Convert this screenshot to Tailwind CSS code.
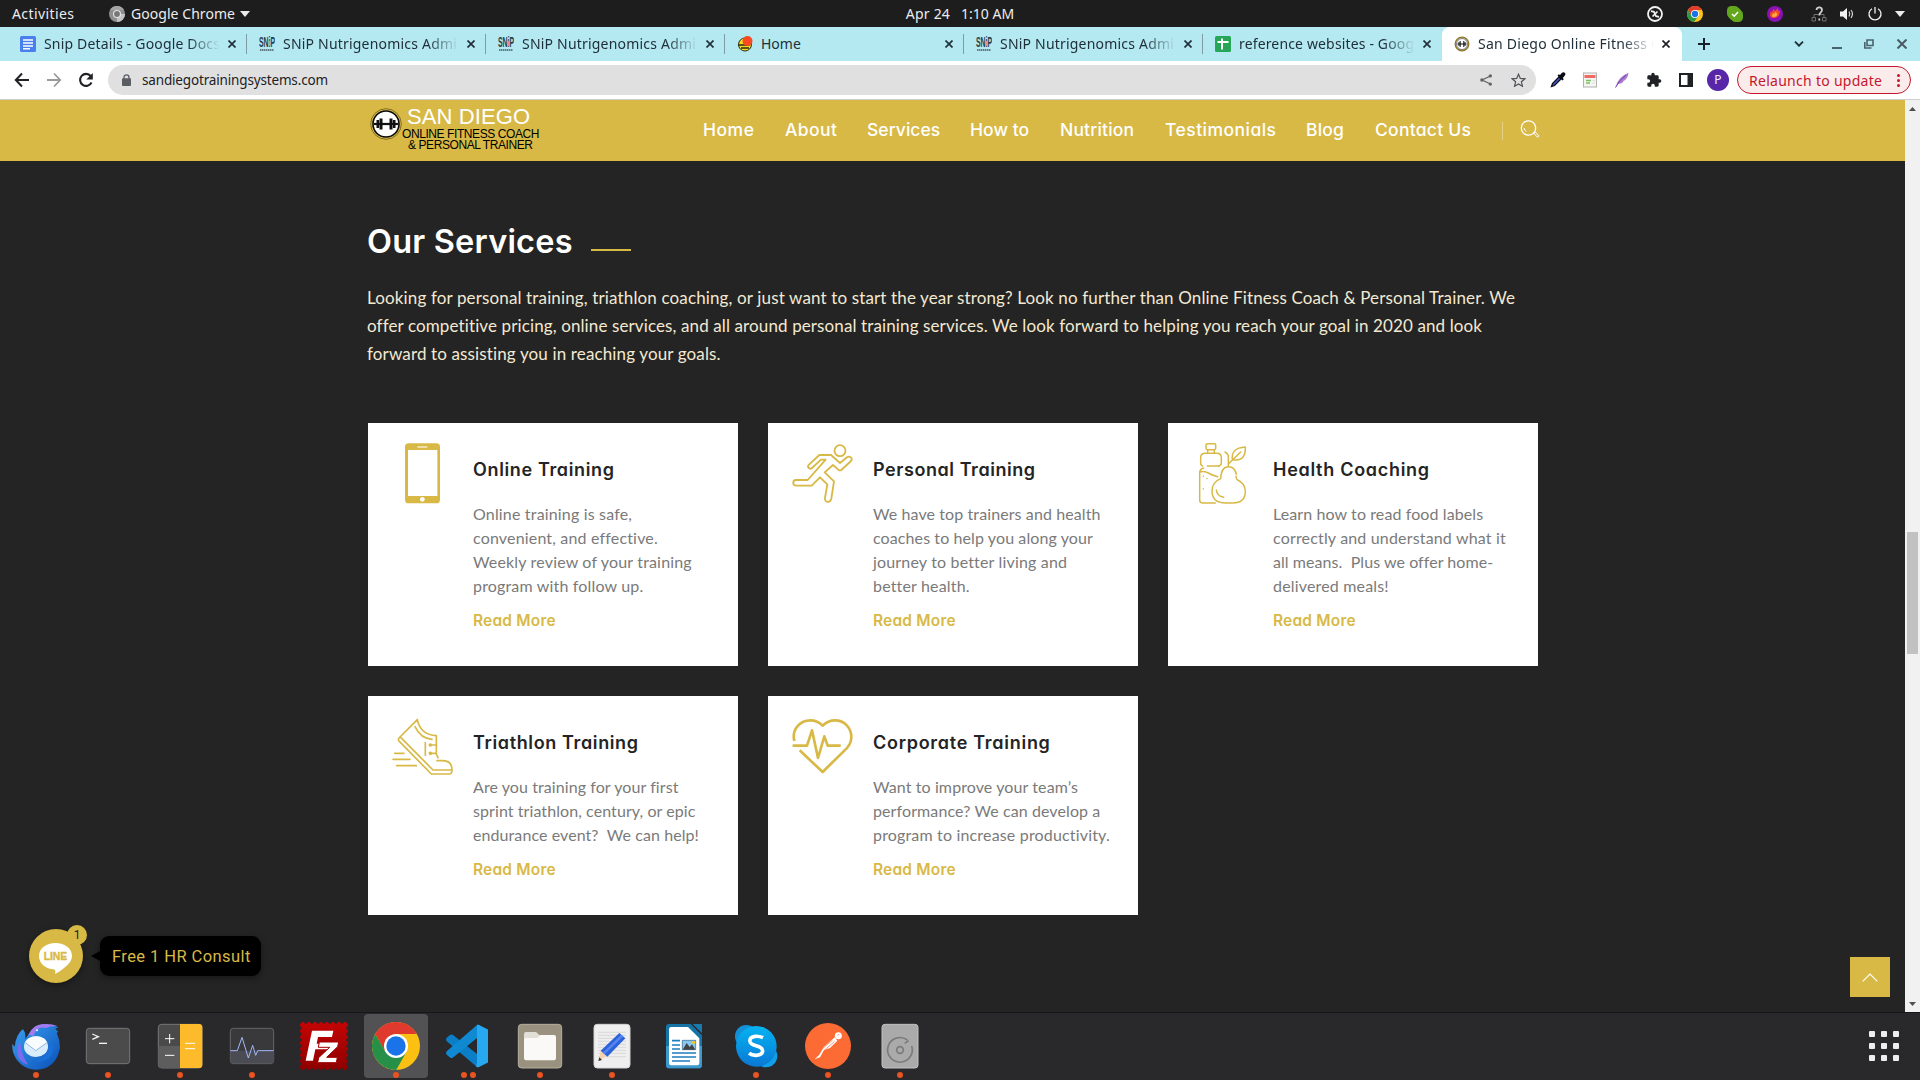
<!DOCTYPE html>
<html lang="en">
<head>
<meta charset="utf-8">
<title>San Diego Online Fitness Coach</title>
<script src="https://cdn.jsdelivr.net/npm/@tailwindcss/browser@4"></script>
</head>
<body class="w-[1920px] h-[1080px] overflow-hidden flex flex-col bg-[#242424] font-['Noto_Sans',sans-serif]">

<!-- system top bar -->
<header class="relative h-[27px] shrink-0 bg-[#1d1d1d] text-[#ececec] text-[14px] leading-[26px] flex items-center justify-between pl-3 pr-[15px]">
  <div class="flex items-center">
    <span class="w-[97px] tracking-[0.41px]">Activities</span>
    <svg class="w-4 h-4" viewBox="0 0 16 16"><circle cx="8" cy="8" r="8" fill="#8f8f8f"/><path d="M8 8h8a8 8 0 0 1-8 8z" fill="#c4c4c4"/><path d="M1 4a8 8 0 0 1 14 0H8z" fill="#a5a5a5"/><circle cx="8" cy="8" r="4" fill="#e6e6e6"/><circle cx="8" cy="8" r="2.9" fill="#777"/></svg>
    <span class="ml-[6px] tracking-[0.05px]">Google Chrome</span>
    <svg class="ml-[5px] w-[10px] h-[6px]" viewBox="0 0 10 6"><path d="M0 0h10L5 6z" fill="#ececec"/></svg>
  </div>
  <div class="absolute left-1/2 -translate-x-1/2 flex gap-[11px] whitespace-nowrap"><span class="tracking-[0.2px]">Apr 24</span><span>1:10 AM</span></div>
  <div class="flex items-center">
    <svg class="w-4 h-4 mr-6" viewBox="0 0 16 16" fill="none" stroke="#f2f2f2"><circle cx="8" cy="8" r="7" stroke-width="1.8"/><path d="M4 5.200 7 5.800 8 8 9 10.200 12 10.800M7.500 8.500 5.500 10.500M8.500 7.500l2-2" stroke-width="1.700"/></svg>
    <svg class="w-4 h-4 mr-6" viewBox="0 0 48 48"><circle cx="24" cy="24" r="24" fill="#fcc31c"/><path d="M3.200 12A24 24 0 0 1 44.800 12H24L13.600 30z" fill="#e33b2e"/><path d="M3.200 12a24 24 0 0 0 17.700 35.800L34.400 30H13.600z" fill="#2d9a48"/><circle cx="24" cy="24" r="12" fill="#fff"/><circle cx="24" cy="24" r="9.500" fill="#1a73e8"/></svg>
    <svg class="w-4 h-4 mr-6" viewBox="0 0 16 16"><rect width="12" height="12" rx="4.500" fill="#62a71c"/><rect x="4" y="4" width="12" height="12" rx="4.500" fill="#62a71c"/><circle cx="8" cy="8" r="7" fill="#62a71c"/><path d="m5 8 2.200 2.200L11 6" stroke="#fff" stroke-width="1.600" fill="none"/></svg>
    <svg class="w-4 h-4 mr-7" viewBox="0 0 16 16"><circle cx="8" cy="8" r="8" fill="#8a12b4"/><path d="M3 9.500 3.500 5l1.300 1.500L6.500 3l1.500 2 3-3v3l2-.5c0 3-1 7-5.500 7.500C5 12.300 3.500 11.500 3 9.500z" fill="#f5482c"/><path d="M5 9.500 6 7l1 1 2-2.500.5 2 1-.5c0 2.500-1.500 4-3.500 4-1 0-2-.5-2-1.500z" fill="#fcae3a"/></svg>
    <svg class="w-4 h-4 mr-3" viewBox="0 0 16 16" fill="none" stroke="#6f6f6f"><path d="M1 11.500h3.500v3.500H1zM11.500 11.500H15v3.500h-3.500zM3 11V8.500h10V11"/><path d="M5.500 4c0-3.500 5.500-3.500 5.500 0 0 2.500-2.700 2.500-2.700 5.500M8.300 12.500v2" stroke="#cfcfcf" stroke-width="1.800"/></svg>
    <svg class="w-4 h-4 mr-3" viewBox="0 0 16 16"><path d="M1 5.500h3L8 2v12L4 10.500H1z" fill="#f2f2f2"/><path d="M10 5.500q1.500 2.500 0 5M12 4q3 4 0 8" fill="none" stroke="#d5d5d5" stroke-width="1.200"/></svg>
    <svg class="w-4 h-4 mr-3" viewBox="0 0 16 16" fill="none" stroke="#f2f2f2" stroke-width="1.300"><path d="M5 2.700a6 6 0 1 0 6 0M8 1v6.500"/></svg>
    <svg class="w-[10px] h-[6px]" viewBox="0 0 10 6"><path d="M0 0h10L5 6z" fill="#ececec"/></svg>
  </div>
</header>

<!-- browser tabs -->
<nav class="h-[34px] shrink-0 bg-[#b5e9f2] flex items-stretch pl-2 text-[14px] leading-[34px] text-[#20303a]">
  <div class="w-[239px] flex items-center pl-3">
    <svg class="w-4 h-4 shrink-0" viewBox="0 0 16 16"><rect width="16" height="16" rx="1.500" fill="#4a80ee"/><path d="M3 4h10M3 7h10M3 10h10M3 12.800h7" stroke="#fff" stroke-width="1.500"/></svg>
    <span class="ml-2 w-[176px] overflow-hidden whitespace-nowrap tracking-[0.16px] [mask-image:linear-gradient(to_right,black_82%,transparent)]">Snip Details - Google Docs</span>
    <svg class="ml-2 w-2 h-2" viewBox="0 0 8 8"><path d="m.5.500 7 7M7.500.500l-7 7" stroke="#20303a" stroke-width="1.700"/></svg>
    <i class="ml-auto w-px h-5 bg-[#7f9ca4]"></i>
  </div>
  <div class="w-[239px] flex items-center pl-3">
    <svg class="w-4 h-4 shrink-0" viewBox="0 0 16 16"><text transform="scale(.46 1)" x="0" y="11" font-family="Liberation Sans" font-weight="bold" font-size="15" fill="#26404a">SNiP</text><rect x="10" y="5" width="1.500" height="5" fill="#e58a8a"/><path d="M1 14h14" stroke="#5f7c84" stroke-width="2" stroke-dasharray="1.500 .5"/></svg>
    <span class="ml-2 w-[176px] overflow-hidden whitespace-nowrap tracking-[0.2px] [mask-image:linear-gradient(to_right,black_82%,transparent)]">SNiP Nutrigenomics Admi</span>
    <svg class="ml-2 w-2 h-2" viewBox="0 0 8 8"><path d="m.5.500 7 7M7.500.500l-7 7" stroke="#20303a" stroke-width="1.700"/></svg>
    <i class="ml-auto w-px h-5 bg-[#7f9ca4]"></i>
  </div>
  <div class="w-[239px] flex items-center pl-3">
    <svg class="w-4 h-4 shrink-0" viewBox="0 0 16 16"><text transform="scale(.46 1)" x="0" y="11" font-family="Liberation Sans" font-weight="bold" font-size="15" fill="#26404a">SNiP</text><rect x="10" y="5" width="1.500" height="5" fill="#e58a8a"/><path d="M1 14h14" stroke="#5f7c84" stroke-width="2" stroke-dasharray="1.500 .5"/></svg>
    <span class="ml-2 w-[176px] overflow-hidden whitespace-nowrap tracking-[0.2px] [mask-image:linear-gradient(to_right,black_82%,transparent)]">SNiP Nutrigenomics Admi</span>
    <svg class="ml-2 w-2 h-2" viewBox="0 0 8 8"><path d="m.5.500 7 7M7.500.500l-7 7" stroke="#20303a" stroke-width="1.700"/></svg>
    <i class="ml-auto w-px h-5 bg-[#7f9ca4]"></i>
  </div>
  <div class="w-[239px] flex items-center pl-3">
    <svg class="w-4 h-4 shrink-0" viewBox="0 0 16 16"><circle cx="8" cy="8.500" r="6.500" fill="#f2da25" stroke="#2a2a10"/><path d="M1 9h10q3 0 3-3M4 12h8" stroke="#2a2a10" stroke-width="1.400" fill="none"/><circle cx="10.500" cy="5" r="5" fill="#fb4a22"/></svg>
    <span class="ml-2 w-[176px] overflow-hidden whitespace-nowrap">Home</span>
    <svg class="ml-2 w-2 h-2" viewBox="0 0 8 8"><path d="m.5.500 7 7M7.500.500l-7 7" stroke="#20303a" stroke-width="1.700"/></svg>
    <i class="ml-auto w-px h-5 bg-[#7f9ca4]"></i>
  </div>
  <div class="w-[239px] flex items-center pl-3">
    <svg class="w-4 h-4 shrink-0" viewBox="0 0 16 16"><text transform="scale(.46 1)" x="0" y="11" font-family="Liberation Sans" font-weight="bold" font-size="15" fill="#26404a">SNiP</text><rect x="10" y="5" width="1.500" height="5" fill="#e58a8a"/><path d="M1 14h14" stroke="#5f7c84" stroke-width="2" stroke-dasharray="1.500 .5"/></svg>
    <span class="ml-2 w-[176px] overflow-hidden whitespace-nowrap tracking-[0.2px] [mask-image:linear-gradient(to_right,black_82%,transparent)]">SNiP Nutrigenomics Admi</span>
    <svg class="ml-2 w-2 h-2" viewBox="0 0 8 8"><path d="m.5.500 7 7M7.500.500l-7 7" stroke="#20303a" stroke-width="1.700"/></svg>
    <i class="ml-auto w-px h-5 bg-[#7f9ca4]"></i>
  </div>
  <div class="w-[239px] flex items-center pl-3">
    <svg class="w-4 h-4 shrink-0" viewBox="0 0 16 16"><rect width="16" height="16" rx="1.500" fill="#27a658"/><path d="M2.500 6h11M7 2.500v11" stroke="#fff" stroke-width="2"/></svg>
    <span class="ml-2 w-[176px] overflow-hidden whitespace-nowrap tracking-[0.15px] [mask-image:linear-gradient(to_right,black_82%,transparent)]">reference websites - Goog</span>
    <svg class="ml-2 w-2 h-2" viewBox="0 0 8 8"><path d="m.5.500 7 7M7.500.500l-7 7" stroke="#20303a" stroke-width="1.700"/></svg>
  </div>
  <div class="w-[240px] flex items-center pl-3 bg-white rounded-t-lg">
    <svg class="w-4 h-4 shrink-0" viewBox="0 0 16 16"><circle cx="8" cy="8" r="6.800" fill="#fff" stroke="#8d7522" stroke-width="1.300"/><circle cx="8" cy="8" r="5.500" fill="none" stroke="#222" stroke-width=".6"/><path d="M3.500 8h9M5 6v4M11 6v4M6.200 5v6M9.800 5v6" stroke="#111"/></svg>
    <span class="ml-2 w-[176px] overflow-hidden whitespace-nowrap tracking-[0.25px] [mask-image:linear-gradient(to_right,black_82%,transparent)]">San Diego Online Fitness C</span>
    <svg class="ml-2 w-2 h-2" viewBox="0 0 8 8"><path d="m.5.500 7 7M7.500.500l-7 7" stroke="#202124" stroke-width="1.700"/></svg>
  </div>
  <div class="flex-1 flex items-center text-[#20303a]">
    <svg class="ml-4 w-3 h-3" viewBox="0 0 12 12"><path d="M6 0v12M0 6h12" stroke="#15202a" stroke-width="2"/></svg>
    <svg class="ml-[84px] w-[10px] h-[6px]" viewBox="0 0 10 6"><path d="m1 .7 4 4 4-4" stroke="#20303a" stroke-width="1.900" fill="none"/></svg>
    <svg class="ml-7 w-[10px] h-[10px]" viewBox="0 0 10 10"><path d="M0 9h10" stroke="#4a636b" stroke-width="2"/></svg>
    <svg class="ml-[22px] w-[10px] h-[10px]" viewBox="0 0 10 10" fill="none" stroke="#4a636b" stroke-width="1.600"><path d="M3 1h6v5.500H3z"/><path d="M.8 3v6H7.500"/></svg>
    <svg class="ml-[23px] w-[10px] h-[10px]" viewBox="0 0 10 10"><path d="m.5.500 9 9M9.500.500l-9 9" stroke="#4a5a62" stroke-width="2"/></svg>
  </div>
</nav>

<!-- address bar -->
<div class="h-[39px] shrink-0 bg-white border-b border-[#cfcfcf] flex items-center pl-[14px] pr-[9px]">
  <svg class="w-4 h-4" viewBox="0 0 16 16" fill="none" stroke="#202124" stroke-width="2"><path d="M15 8H2M8 1.500 1.800 8 8 14.500"/></svg>
  <svg class="ml-4 w-4 h-4" viewBox="0 0 16 16" fill="none" stroke="#9a9a9a" stroke-width="1.800"><path d="M1 8h13M8 1.500 14.200 8 8 14.500"/></svg>
  <svg class="ml-4 w-4 h-4" viewBox="0 0 16 16"><path d="M13.500 10.500A6 6 0 1 1 12.700 4" fill="none" stroke="#202124" stroke-width="2.100"/><path d="M14.800 1v6.500H8.300z" fill="#202124"/></svg>
  <div class="ml-[14px] w-[1428px] h-[30px] rounded-full bg-[#e0e0e0] flex items-center pl-[14px] pr-[10px] text-[14px] text-[#202124]">
    <svg class="w-[9px] h-3" viewBox="0 0 9 12"><rect y="4.300" width="9" height="7.700" rx="1" fill="#5a5d61"/><path d="M2 5V3.300a2.500 2.500 0 0 1 5 0V5" fill="none" stroke="#5a5d61" stroke-width="1.300"/></svg>
    <span class="ml-[11px] text-[13.5px] tracking-[-0.16px]">sandiegotrainingsystems.com</span>
    <svg class="ml-auto w-3 h-3" viewBox="0 0 12 12"><path d="M10.500 2 2 6l8.500 4" fill="none" stroke="#5f6368" stroke-width="1.300"/><circle cx="10.300" cy="1.900" r="1.700" fill="#5f6368"/><circle cx="1.900" cy="6" r="1.700" fill="#5f6368"/><circle cx="10.300" cy="10.100" r="1.700" fill="#5f6368"/></svg>
    <svg class="ml-[19px] w-[15px] h-[14px]" viewBox="0 0 15 14"><path d="m7.500 1.200 1.800 4.200 4.600.4-3.500 3 1.100 4.500-4-2.400-4 2.400 1.100-4.500-3.500-3 4.600-.4z" fill="none" stroke="#4f5358" stroke-width="1.200"/></svg>
  </div>
  <svg class="ml-[14px] w-4 h-4" viewBox="0 0 16 16"><path d="m1.500 14.500 1-3L9 5l2 2-6.500 6.500z" fill="#4259c8" stroke="#0a0a14" stroke-width="1.300"/><path d="m7.500 3.500 1.300-1.300 1.200.8 2-2.200q1.500-1.200 2.800 0t0 2.800L12.800 6l1 1.300-1.300 1.200z" fill="#0a0a14"/></svg>
  <svg class="ml-4 w-4 h-4" viewBox="0 0 16 16"><rect x="1.500" y="1" width="13" height="14" fill="#f4f4f2" stroke="#b0b0b0"/><rect x="2.500" y="3" width="11" height="3" fill="#ef6b62"/><path d="M4 8.500h5M4 11h4" stroke="#78c05c" stroke-width="1.400"/><path d="M10.500 8.500H13M10 11h3" stroke="#ddd"/></svg>
  <svg class="ml-4 w-4 h-4" viewBox="0 0 16 16"><path d="M1.500 15Q4 5 14.500.800 14 6 10.500 8.500L9 9l.5.800Q7 12 4 12z" fill="#a97bd0"/><path d="M1.500 15.500Q5 8 12 3" stroke="#7b45ad" fill="none"/></svg>
  <svg class="ml-4 w-4 h-4" viewBox="0 0 24 24"><path d="M20.500 11H19V7c0-1.100-.9-2-2-2h-4V3.500a2.500 2.500 0 0 0-5 0V5H4c-1.100 0-2 .9-2 2v3.800h1.500a2.700 2.700 0 0 1 0 5.400H2V20c0 1.100.9 2 2 2h3.800v-1.500a2.700 2.700 0 0 1 5.400 0V22H17c1.100 0 2-.9 2-2v-4h1.500a2.500 2.500 0 0 0 0-5z" fill="#202124"/></svg>
  <svg class="ml-[17px] w-[14px] h-[14px]" viewBox="0 0 14 14"><rect x="1" y="1" width="12" height="12" fill="#fff" stroke="#202124" stroke-width="2"/><path d="M8.500 0H14v14H8.500z" fill="#202124"/></svg>
  <span class="ml-[14px] w-[22px] h-[22px] rounded-full bg-[#5727a8] text-[#f2ecfa] text-[12px] leading-[22px] text-center">P</span>
  <div class="ml-auto w-[174px] h-[28px] rounded-full border border-[#c5162e] bg-[#faeceb] text-[#c5162e] text-[14px] flex items-center pl-[11px] pr-[10px] whitespace-nowrap">
    <span class="tracking-[0.28px]">Relaunch to update</span>
    <svg class="ml-auto w-[3px] h-[13px]" viewBox="0 0 3 13" fill="#c5162e"><circle cx="1.500" cy="1.500" r="1.500"/><circle cx="1.500" cy="6.500" r="1.500"/><circle cx="1.500" cy="11.500" r="1.500"/></svg>
  </div>
</div>

<!-- page viewport -->
<div class="h-[912px] shrink-0 flex">
<main class="relative w-[1905px] bg-[#242424]">
  <div class="h-[61px] bg-[#d8b946]">
    <div class="w-[1171px] h-full ml-[368px] flex items-center">
      <div class="flex pl-[2px] pb-[3px]">
        <svg class="w-8 h-[34px]" viewBox="0 0 32 34"><circle cx="16" cy="17" r="15.300" fill="none" stroke="#6d5b1c" stroke-width=".8"/><circle cx="16" cy="17" r="13" fill="#fff" stroke="#0a0a0a" stroke-width="1.600"/><path d="M4 17h24" stroke="#111" stroke-width="2.200"/><path d="M7.800 13v8M24.200 13v8" stroke="#111" stroke-width="2.600"/><path d="M11 11.500v11M21 11.500v11" stroke="#111" stroke-width="3"/></svg>
        <div class="flex flex-col font-['Liberation_Sans',Arial,sans-serif] whitespace-nowrap text-black">
          <span class="pl-[5px] text-[22px] leading-[20px] tracking-[0.1px] text-white">SAN DIEGO</span>
          <span class="pt-[1px] text-[12px] leading-[12px] tracking-[-0.42px]">ONLINE FITNESS COACH</span>
          <span class="pl-[6px] text-[12px] leading-[11px] tracking-[-0.42px]">&amp; PERSONAL TRAINER</span>
        </div>
      </div>
      <div class="ml-auto flex items-center text-white text-[17.5px] font-medium whitespace-nowrap font-['Inter',sans-serif] [font-feature-settings:'cv11']">
        <a class="w-[82px] tracking-[0.5px]">Home</a>
        <a class="w-[82px] tracking-[0.4px]">About</a>
        <a class="w-[103px] tracking-[0.05px]">Services</a>
        <a class="w-[90px] tracking-[0.05px]">How to</a>
        <a class="w-[105px] tracking-[0.18px]">Nutrition</a>
        <a class="w-[141px] tracking-[0.47px]">Testimonials</a>
        <a class="w-[69px] tracking-[0.2px]">Blog</a>
        <a class="w-[97px] tracking-[0.26px]">Contact Us</a>
        <i class="ml-[30px] w-px h-[18px] bg-[#e5d085]"></i>
        <svg class="ml-[17px] mb-[3px] w-[19px] h-[18px] overflow-visible" viewBox="0 0 19 18" fill="none" stroke="#fff" stroke-width="1.300"><circle cx="8.500" cy="8" r="7.200"/><path d="M4.200 8a4.300 4.300 0 0 0 2 3.600M13.500 12.800l4 4.500 1.500-1.400-4-4.200z" stroke-width="1"/></svg>
      </div>
    </div>
  </div>

  <section class="w-[1170px] ml-[368px] pt-[57px]">
    <div class="flex items-end gap-[18px] font-['Inter',sans-serif] [font-feature-settings:'cv11']">
      <h2 class="-ml-px text-white text-[32.5px] leading-[48px] font-semibold tracking-[0.2px]">Our Services</h2>
      <i class="w-10 h-[2px] mb-[15px] bg-[#d8b946]"></i>
    </div>
    <p class="-ml-px mt-[18px] text-[17px] leading-[28px] tracking-[0.138px] text-[#f3e9d2] font-['Lato',sans-serif] whitespace-nowrap">Looking for personal training, triathlon coaching, or just want to start the year strong? Look no further than Online Fitness Coach &amp; Personal Trainer. We<br><span class="tracking-[0.115px]">offer competitive pricing, online services, and all around personal training services. We look forward to helping you reach your goal in 2020 and look</span><br>forward to assisting you in reaching your goals.</p>

    <div class="mt-[55px] grid grid-cols-3 gap-[30px] font-['Lato',sans-serif] text-[16px] leading-[24px] tracking-[0.17px] text-[#7a7a7a] whitespace-nowrap">
      <article class="h-[243px] bg-white flex pt-5 pl-6 gap-[21px]">
        <svg class="w-[60px] h-[60px] shrink-0 overflow-visible" viewBox="96 84 180 180"><rect x="135" y="85" width="105" height="180" rx="11" fill="#d8b946"/><path d="M144 105h88v138h-88z" fill="#fff"/><path d="M174 96h26" stroke="#f6ecc8" stroke-width="5" stroke-linecap="round"/><circle cx="187" cy="253" r="7" fill="#fff"/></svg>
        <div class="pt-[12px]">
          <h3 class="text-[#242424] text-[18px] leading-[30px] font-semibold tracking-[0.64px] font-['Inter',sans-serif] [font-feature-settings:'cv11']">Online Training</h3>
          <p class="mt-[17px]">Online training is safe,<br>convenient, and effective.<br>Weekly review of your training<br>program with follow up.</p>
          <a class="block mt-[11px] text-[15.5px] font-semibold tracking-[0.2px] text-[#d8b946] font-['Inter',sans-serif] [font-feature-settings:'cv11']">Read More</a>
        </div>
      </article>
      <article class="h-[243px] bg-white flex pt-5 pl-6 gap-[21px]">
        <svg class="w-[60px] h-[60px] shrink-0 overflow-visible" viewBox="96 84 180 180" fill="none" stroke="#d8b946" stroke-width="5.500" stroke-linejoin="round"><circle cx="240" cy="107" r="16.500"/><path d="M178 120H213L240 144L261 127C270 121 280 131 273 138L244 165Q240 168 235 164L219 150L194 172L222 199L214 251C211 265 193 263 195 249L202 208L180 187L155 212H108C97 212 97 195 108 195H143L197 134H183L156 159C148 165 140 156 147 149Z"/></svg>
        <div class="pt-[12px]">
          <h3 class="text-[#242424] text-[18px] leading-[30px] font-semibold tracking-[0.56px] font-['Inter',sans-serif] [font-feature-settings:'cv11']">Personal Training</h3>
          <p class="mt-[17px]"><span class="tracking-[0.1px]">We have top trainers and health<br>coaches to help you along your</span><br>journey to better living and<br>better health.</p>
          <a class="block mt-[11px] text-[15.5px] font-semibold tracking-[0.2px] text-[#d8b946] font-['Inter',sans-serif] [font-feature-settings:'cv11']">Read More</a>
        </div>
      </article>
      <article class="h-[243px] bg-white flex pt-5 pl-6 gap-[21px]">
        <svg class="w-[60px] h-[60px] shrink-0 overflow-visible" viewBox="96 84 180 180" fill="none" stroke="#d8b946" stroke-width="4.500" stroke-linecap="round" stroke-linejoin="round"><rect x="138" y="86" width="29" height="18" rx="4"/><path d="M143 105v9M163 105v9M128 153q-6-1-6-8v-16q0-14 14-14h34q14 0 14 14v15q0 7-9 10M142 153h36M131 159q-12 3-12 16v80q0 9 9 9h38M119 171q14-4 26 3 14 8 28 11M205 155v-33q-2-7-10-11M217 134Q212 99 256 96 258 141 217 134zM206 146l36-35M182 190q2-35 23-35 20 0 24 23M228 184q0 8 5 11 23 11 23 34 0 35-38 35h-22q-39 0-40-35 0-28 26-38M169 225q2 18 22 22"/><path d="M130 183v1M141 190v1M130 221v1" stroke-width="4"/></svg>
        <div class="pt-[12px]">
          <h3 class="text-[#242424] text-[18px] leading-[30px] font-semibold tracking-[0.71px] font-['Inter',sans-serif] [font-feature-settings:'cv11']">Health Coaching</h3>
          <p class="mt-[17px]"><span class="tracking-[0.1px]">Learn how to read food labels<br></span>correctly and understand what it<br><span class="tracking-[0.06px]">all means.&nbsp; Plus we offer home-</span><br>delivered meals!</p>
          <a class="block mt-[11px] text-[15.5px] font-semibold tracking-[0.2px] text-[#d8b946] font-['Inter',sans-serif] [font-feature-settings:'cv11']">Read More</a>
        </div>
      </article>
      <article class="h-[219px] bg-white flex pt-5 pl-6 gap-[21px]">
        <svg class="w-[60px] h-[60px] shrink-0 overflow-visible" viewBox="96 78 180 180" fill="none" stroke="#d8b946" stroke-width="5" stroke-linecap="round" stroke-linejoin="round"><path d="M172 89L117 144Q113 149 118 154L214 252H268Q276 252 276 240 276 212 247 212H231M172 89Q182 135 229 137V192L234 203M122 142L219 240H274M165 110Q182 146 216 148M196 158V196M211 165H228M211 190H228M104 190H132M99 208H150M110 227H169"/><circle cx="211" cy="165" r="3"/><circle cx="211" cy="190" r="3"/></svg>
        <div class="pt-[12px]">
          <h3 class="text-[#242424] text-[18px] leading-[30px] font-semibold tracking-[0.63px] font-['Inter',sans-serif] [font-feature-settings:'cv11']">Triathlon Training</h3>
          <p class="mt-[17px] tracking-[0.08px]">Are you training for your first<br>sprint triathlon, century, or epic<br>endurance event?&nbsp; We can help!</p>
          <a class="block mt-[11px] text-[15.5px] font-semibold tracking-[0.2px] text-[#d8b946] font-['Inter',sans-serif] [font-feature-settings:'cv11']">Read More</a>
        </div>
      </article>
      <article class="h-[219px] bg-white flex pt-5 pl-6 gap-[21px]">
        <svg class="w-[60px] h-[60px] shrink-0 overflow-visible" viewBox="96 78 180 180" fill="none" stroke="#d8b946" stroke-width="8" stroke-linejoin="round"><path d="M103 153C94 116 122 91 151 91Q173 91 188 107 204 91 225 91C254 91 274 114 274 141Q274 160 260 175L188 246L119 181"/><path d="M101 167H141L156 121L174 204L193 139L203 167H239" stroke-linecap="round"/></svg>
        <div class="pt-[12px]">
          <h3 class="text-[#242424] text-[18px] leading-[30px] font-semibold tracking-[0.72px] font-['Inter',sans-serif] [font-feature-settings:'cv11']">Corporate Training</h3>
          <p class="mt-[17px]"><span class="tracking-[0.1px]">Want to improve your team’s<br>performance? We can develop a</span><br>program to increase productivity.</p>
          <a class="block mt-[11px] text-[15.5px] font-semibold tracking-[0.2px] text-[#d8b946] font-['Inter',sans-serif] [font-feature-settings:'cv11']">Read More</a>
        </div>
      </article>
    </div>
  </section>

  <!-- chat launcher -->
  <div class="absolute left-[29px] top-[829px] flex items-center font-['Roboto',sans-serif]">
    <div class="relative w-[54px] h-[54px] rounded-full bg-[#d8b946] shadow-[0_2px_6px_rgba(0,0,0,0.4)]">
      <svg class="w-[54px] h-[54px]" viewBox="0 0 54 54"><path d="M26.500 14c9.500 0 16.500 5.500 16.500 13 0 5-4 9-8 12-3 2.500-6 4.500-9 6 .5-2 .8-3.500-.5-4.500C16 40 10 34 10 27c0-7.500 7-13 16.500-13z" fill="#fff"/><text x="14.700" y="31" font-family="Liberation Sans" font-weight="bold" font-size="11" textLength="23.500" lengthAdjust="spacingAndGlyphs" fill="#d8b946" stroke="#d8b946" stroke-width=".4">LINE</text></svg>
      <span class="absolute left-[38px] -top-[4px] w-5 h-5 rounded-full bg-[#d8b946] text-[#222] text-[12px] leading-5 text-center">1</span>
    </div>
    <i class="ml-2 w-[9px] h-[10px] bg-black [clip-path:polygon(0_50%,100%_0,100%_100%)]"></i>
    <div class="w-[161px] h-10 rounded-[9px] bg-black text-[#d8b946] text-[16.5px] leading-[42px] tracking-[0.42px] pl-3 whitespace-nowrap shadow-[0_2px_6px_rgba(0,0,0,0.4)]">Free 1 HR Consult</div>
  </div>
  <!-- back to top -->
  <div class="absolute left-[1850px] top-[857px] w-10 h-10 bg-[#d8b946] flex items-center justify-center">
    <svg class="w-4 h-[9px]" viewBox="0 0 16 9"><path d="m.7 8.300 7.300-7.300 7.300 7.300" fill="none" stroke="#fff" stroke-width="1.200"/></svg>
  </div>
</main>
<!-- scrollbar -->
<aside class="w-[15px] bg-[#f1f1f1] flex flex-col items-center pt-[7px] pb-[6px]">
  <svg class="w-[7px] h-1" viewBox="0 0 7 4"><path d="M0 4h7L3.500 0z" fill="#505050"/></svg>
  <i class="mt-[421px] w-[11px] h-[122px] bg-[#c1c1c1]"></i>
  <svg class="mt-auto w-[7px] h-1" viewBox="0 0 7 4"><path d="M0 0h7L3.500 4z" fill="#505050"/></svg>
</aside>
</div>

<!-- dock -->
<footer class="h-[68px] shrink-0 bg-[#29292b] border-t border-[#161616] flex items-start pt-[1px]">
  <div class="w-[72px] h-[66px] pt-2 flex flex-col items-center">
    <svg class="w-12 h-12" viewBox="36 366 144 144"><defs><linearGradient id="tb" x1="0" y1="0" x2="1" y2="1"><stop offset="0" stop-color="#3aa2f2"/><stop offset="1" stop-color="#0a4fb8"/></linearGradient></defs><path d="M68 388Q78 396 76 418L86 402Q102 374 130 373 155 372 176 382L166 386 175 396 170 398Q182 425 179 448C170 492 140 510 108 509 64 508 34 470 37 432L44 440Q48 404 68 388z" fill="url(#tb)"/><path d="M86 404Q98 376 125 373 152 370 172 378 150 378 136 384 112 376 100 408z" fill="#a57af0"/><path d="M60 424Q46 450 56 474 66 490 84 494 64 466 60 424z" fill="#7a6cf0"/><ellipse cx="108" cy="440" rx="36" ry="31" fill="#d9ecfc"/><path d="M74 428L106 454 142 428 134 416Q108 402 84 416z" fill="#f8fcff"/><path d="M76 428L107 452 141 428" fill="none" stroke="#8bb4e0" stroke-width="3"/><path d="M145 440Q142 476 96 482 126 492 150 472 164 456 158 430z" fill="#1b6fd8"/><circle cx="111" cy="391" r="3" fill="#fff"/></svg>
    <i class="mt-[2px] w-[6px] h-[6px] rounded-full bg-[#e95420]"></i>
  </div>
  <div class="w-[72px] h-[66px] pt-2 flex flex-col items-center">
    <svg class="w-12 h-12" viewBox="252 366 144 144"><rect x="259" y="385" width="130" height="106" rx="9" fill="#4b4b4b" stroke="#777" stroke-width="3"/><path d="M277 402l18 8-18 8" fill="none" stroke="#f4f4f4" stroke-width="4"/><path d="M297 430h24" stroke="#f4f4f4" stroke-width="4"/></svg>
    <i class="mt-[2px] w-[6px] h-[6px] rounded-full bg-[#e95420]"></i>
  </div>
  <div class="w-[72px] h-[66px] pt-2 flex flex-col items-center">
    <svg class="w-12 h-12" viewBox="468 366 144 144"><rect x="475" y="373" width="131" height="131" rx="10" fill="#4a4a4a" stroke="#777" stroke-width="3"/><path d="M475 438h65v66h-55q-10 0-10-10z" fill="#5d5d5d"/><path d="M540 372h57q10 0 10 10v112q0 10-10 10h-57z" fill="#fdbb2c"/><path d="M495 416h28M509 402v28M495 466h28M555 430h30M555 446h30" stroke="#fff" stroke-width="3"/></svg>
    <i class="mt-[2px] w-[6px] h-[6px] rounded-full bg-[#e95420]"></i>
  </div>
  <div class="w-[72px] h-[66px] pt-2 flex flex-col items-center">
    <svg class="w-12 h-12" viewBox="684 366 144 144"><rect x="691" y="385" width="130" height="106" rx="9" fill="#39393c" stroke="#666" stroke-width="3"/><path d="M692 452h129v30q0 8-8 8H700q-8 0-8-8z" fill="#4a4b53"/><path d="M691 452h21l14-40 19 62 13-38 9 30 6-14h48" fill="none" stroke="#a3b8fb" stroke-width="3"/></svg>
    <i class="mt-[2px] w-[6px] h-[6px] rounded-full bg-[#e95420]"></i>
  </div>
  <div class="w-[72px] h-[66px] pt-2 flex flex-col items-center">
    <svg class="w-12 h-12" viewBox="900 366 144 144"><defs><linearGradient id="fz" x1="0" y1="0" x2="0" y2="1"><stop offset="0" stop-color="#c40404"/><stop offset="1" stop-color="#8e0000"/></linearGradient></defs><rect x="900" y="366" width="144" height="144" fill="url(#fz)"/><rect x="900" y="366" width="144" height="144" fill="none" stroke="#29292b" stroke-width="11" stroke-linecap="round" stroke-dasharray="0 18"/><path d="M936 392h64l-4 19h-42l-4 20h44l-4 17h-44l-7 34h-22z" fill="#fff"/><path d="M958 426h58l-3 14-33 32h32l-3 16h-56l3-15 33-31h-34z" fill="#fff" stroke="#a00000" stroke-width="3"/></svg>
  </div>
  <div class="w-[72px] h-[66px] flex justify-center">
    <div class="w-16 h-16 rounded bg-[#525254] pt-2 flex flex-col items-center">
      <svg class="w-12 h-12" viewBox="0 0 48 48"><circle cx="24" cy="24" r="24" fill="#fcc013"/><path d="M3.200 12A24 24 0 0 1 44.800 12H24L13.600 30z" fill="#e0392d"/><path d="M3.200 12a24 24 0 0 0 21 36L34.400 30H13.600z" fill="#279048"/><circle cx="24" cy="24" r="12" fill="#fff"/><circle cx="24" cy="24" r="9.700" fill="#1a73e8"/></svg>
      <i class="mt-[2px] w-[6px] h-[6px] rounded-full bg-[#e95420]"></i>
    </div>
  </div>
  <div class="w-[72px] h-[66px] pt-2 flex flex-col items-center">
    <svg class="w-12 h-12" viewBox="0 0 48 48"><path d="M33 3v42L3 19.500q-2-2 0-4L6 13q1.500-1 3 0L33 32z" fill="#0a7fc7"/><path d="M33 3 3 29q-2 2 0 4l3 2.500q1.500 1 3 0L33 16z" fill="#1089d3"/><path d="M33 3q1-.8 2 0l9 4.500v33L35 45q-1.500.8-3-.5l1-4z" fill="#27a9f2"/></svg>
    <div class="mt-[2px] flex gap-[3px]"><i class="w-[6px] h-[6px] rounded-full bg-[#e95420]"></i><i class="w-[6px] h-[6px] rounded-full bg-[#e95420]"></i></div>
  </div>
  <div class="w-[72px] h-[66px] pt-2 flex flex-col items-center">
    <svg class="w-12 h-12" viewBox="108 66 144 144"><rect x="115" y="73" width="130" height="131" rx="10" fill="#9a927f" stroke="#b6b0a0" stroke-width="3"/><path d="M132 102q0-6 6-6h30l10 9h44v20h-90z" fill="#e2dfd6"/><path d="M132 120q0-6 6-6h34l10-9h40q6 0 6 6v64q0 6-6 6h-84q-6 0-6-6z" fill="#faf9f8"/></svg>
    <i class="mt-[2px] w-[6px] h-[6px] rounded-full bg-[#e95420]"></i>
  </div>
  <div class="w-[72px] h-[66px] pt-2 flex flex-col items-center">
    <svg class="w-12 h-12" viewBox="324 66 144 144"><rect x="342" y="73" width="108" height="131" rx="10" fill="#efefef" stroke="#d4d4d4" stroke-width="3"/><path d="M354 97h84M354 106h84M354 115h84M354 124h84M354 133h84M354 142h84M354 151h84M354 160h84M354 170h84" stroke="#cfcfcf" stroke-width="2"/><path d="M355 183l7-31 17 17z" fill="#f6d3ae"/><path d="M355 183l3-11 8 8z" fill="#333"/><path d="M362 152l56-53 18 16-54 55z" fill="#2c62dc"/><path d="M368 158l56-54 6 5-56 54z" fill="#5587ee"/></svg>
    <i class="mt-[2px] w-[6px] h-[6px] rounded-full bg-[#e95420]"></i>
  </div>
  <div class="w-[72px] h-[66px] pt-2 flex flex-col items-center">
    <svg class="w-12 h-12" viewBox="540 66 144 144"><path d="M568 72h64l34 34v88q0 11-10 11h-88q-10 0-10-11V82q0-10 10-10z" fill="#1673a8"/><path d="M558 138h108v56q0 11-10 11h-88q-10 0-10-11z" fill="#3c98cd"/><path d="M638 72h28v28z" fill="#1a7ab0"/><path d="M574 81h50l34 34v74q0 7-7 7h-77q-7 0-7-7V88q0-7 7-7z" fill="#fff"/><path d="M576 122h24M576 135h24M576 147h24M576 159h72M576 171h72M576 183h54" stroke="#1c7fbd" stroke-width="5"/><path d="M607 121h40v28h-40z" fill="#8cc8ee" stroke="#1c5f8d" stroke-width="2"/><path d="M608 149l12-20 9 12 7-8 10 16z" fill="#444"/><circle cx="641" cy="127" r="5" fill="#f5c61a"/></svg>
  </div>
  <div class="w-[72px] h-[66px] pt-2 flex flex-col items-center">
    <svg class="w-12 h-12" viewBox="756 66 144 144"><defs><linearGradient id="sk" x1="0" y1="0" x2="0" y2="1"><stop offset="0" stop-color="#05b3f2"/><stop offset="1" stop-color="#0a78d6"/></linearGradient></defs><circle cx="799" cy="109" r="34" fill="#1390d8"/><circle cx="858" cy="168" r="34" fill="#0fa0e8"/><circle cx="829" cy="139" r="61" fill="url(#sk)"/><path d="M849 113Q838 108 826 109 808 111 810 124 812 133 828 137 848 142 848 153 846 166 828 166 815 166 807 160" fill="none" stroke="#fff" stroke-width="11"/></svg>
    <i class="mt-[2px] w-[6px] h-[6px] rounded-full bg-[#e95420]"></i>
  </div>
  <div class="w-[72px] h-[66px] pt-2 flex flex-col items-center">
    <svg class="w-12 h-12" viewBox="972 66 144 144"><circle cx="1044" cy="138" r="69" fill="#fd6b35"/><circle cx="1075" cy="107" r="10.500" fill="#fff"/><path d="M1064 112l8 10-22 22-18 6-12 22-16 6 14-14 14-24z" fill="#fff"/><path d="M1072 106l6-3M1030 144l28-24M1036 148l28-24" stroke="#fd6b35" stroke-width="2"/></svg>
    <i class="mt-[2px] w-[6px] h-[6px] rounded-full bg-[#e95420]"></i>
  </div>
  <div class="w-[72px] h-[66px] pt-2 flex flex-col items-center">
    <svg class="w-12 h-12" viewBox="1188 66 144 144"><rect x="1206" y="73" width="108" height="131" rx="9" fill="#aaa" stroke="#c2c2c2" stroke-width="3"/><path d="M1282 120A37 37 0 1 0 1295 138" fill="none" stroke="#7b7b7b" stroke-width="5"/><path d="M1274 130l12-8" stroke="#7b7b7b" stroke-width="5"/><circle cx="1260" cy="150" r="10" fill="none" stroke="#7b7b7b" stroke-width="5"/></svg>
    <i class="mt-[2px] w-[6px] h-[6px] rounded-full bg-[#e95420]"></i>
  </div>
  <div class="ml-auto mr-[21px] mt-[17px] grid grid-cols-3 gap-[6px]">
    <i class="w-[6px] h-[6px] rounded-[1px] bg-[#eee]"></i><i class="w-[6px] h-[6px] rounded-[1px] bg-[#eee]"></i><i class="w-[6px] h-[6px] rounded-[1px] bg-[#eee]"></i>
    <i class="w-[6px] h-[6px] rounded-[1px] bg-[#eee]"></i><i class="w-[6px] h-[6px] rounded-[1px] bg-[#eee]"></i><i class="w-[6px] h-[6px] rounded-[1px] bg-[#eee]"></i>
    <i class="w-[6px] h-[6px] rounded-[1px] bg-[#eee]"></i><i class="w-[6px] h-[6px] rounded-[1px] bg-[#eee]"></i><i class="w-[6px] h-[6px] rounded-[1px] bg-[#eee]"></i>
  </div>
</footer>
</body>
</html>
